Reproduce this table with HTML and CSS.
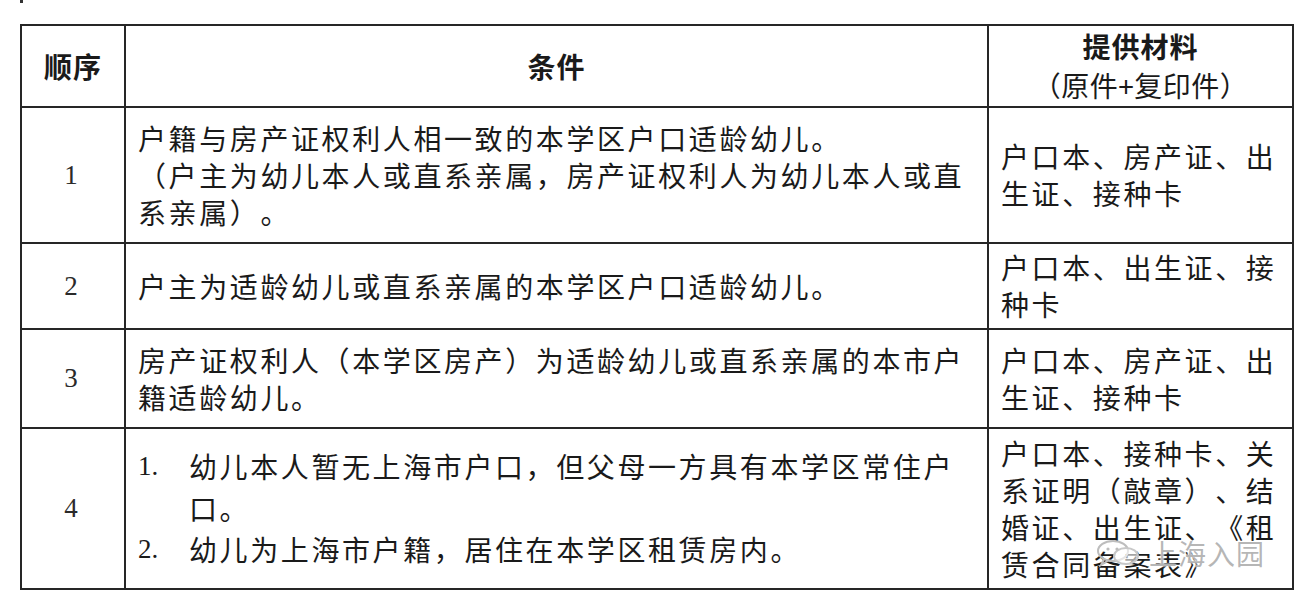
FILE: index.html
```html
<!DOCTYPE html>
<html lang="zh-CN">
<head>
<meta charset="utf-8">
<title>入园条件</title>
<link rel="stylesheet" href="styles.css">
</head>
<body>
<div class="page">
  <div class="mark"></div>
  <div class="sheet">
    <table class="grid">
      <colgroup>
        <col class="c-order">
        <col class="c-cond">
        <col class="c-mat">
      </colgroup>
      <thead>
        <tr class="r-head">
          <th class="h-center">顺序</th>
          <th class="h-center">条件</th>
          <th class="h-center"><span class="h-title">提供材料</span><span class="h-sub">（原件+复印件）</span></th>
        </tr>
      </thead>
      <tbody>
        <tr class="r1">
          <td class="num">1</td>
          <td class="txt">户籍与房产证权利人相一致的本学区户口适龄幼儿。<br>（户主为幼儿本人或直系亲属，房产证权利人为幼儿本人或直<br>系亲属）。</td>
          <td class="txt">户口本、房产证、出<br>生证、接种卡</td>
        </tr>
        <tr class="r2">
          <td class="num">2</td>
          <td class="txt">户主为适龄幼儿或直系亲属的本学区户口适龄幼儿。</td>
          <td class="txt">户口本、出生证、接<br>种卡</td>
        </tr>
        <tr class="r3">
          <td class="num">3</td>
          <td class="txt">房产证权利人（本学区房产）为适龄幼儿或直系亲属的本市户<br>籍适龄幼儿。</td>
          <td class="txt">户口本、房产证、出<br>生证、接种卡</td>
        </tr>
        <tr class="r4">
          <td class="num">4</td>
          <td class="txt list">
            <div class="item"><span class="marker">1.</span><span class="body">幼儿本人暂无上海市户口，但父母一方具有本学区常住户<br>口。</span></div>
            <div class="item"><span class="marker">2.</span><span class="body">幼儿为上海市户籍，居住在本学区租赁房内。</span></div>
          </td>
          <td class="txt">户口本、接种卡、关<br>系证明（敲章）、结<br>婚证、出生证、《租<br>赁合同备案表》</td>
        </tr>
      </tbody>
    </table>
    <div class="watermark">
      <svg class="wm-icon" width="46" height="30" viewBox="0 0 46 30" aria-hidden="true">
        <ellipse cx="18" cy="13" rx="15" ry="10" fill="none" stroke="#bdbdbd" stroke-width="2"/>
        <path d="M9 21 L6 27 L14 22" fill="none" stroke="#bdbdbd" stroke-width="2"/>
        <ellipse cx="31" cy="18" rx="12" ry="8" fill="rgba(255,255,255,0.6)" stroke="#c8c8c8" stroke-width="2"/>
        <circle cx="13" cy="11" r="1.6" fill="#bdbdbd"/>
        <circle cx="22" cy="11" r="1.6" fill="#bdbdbd"/>
      </svg>
      <span class="wm-text">上海入园</span>
    </div>
  </div>
</div>
</body>
</html>
```
FILE: styles.css
```css
* { box-sizing: border-box; }

html, body {
  margin: 0;
  padding: 0;
  background: #ffffff;
}

body {
  font-family: "Noto Sans CJK SC", "Noto Sans", sans-serif;
  color: #1a1a1a;
  width: 1309px;
  height: 610px;
  overflow: hidden;
}

.page {
  padding: 0 0 0 20px;
}

.mark {
  width: 3px;
  height: 3px;
  background: #333;
}

.sheet {
  position: relative;
  margin-top: 21px;
  width: 1272px;
}

.grid {
  border-collapse: collapse;
  table-layout: fixed;
  width: 1272px;
  border: 2px solid #262626;
  font-size: 28px;
  letter-spacing: 2.6px;
  text-spacing-trim: space-all;
}

.c-order { width: 104px; }
.c-cond { width: 863px; }
.c-mat { width: 305px; }

.grid th,
.grid td {
  border: 2px solid #262626;
  vertical-align: middle;
  padding: 0;
}

.r-head { height: 82px; }
.r1 { height: 136px; }
.r2 { height: 86px; }
.r3 { height: 99px; }
.r4 { height: 161px; }

.h-center {
  text-align: center;
  font-weight: 700;
  line-height: 39px;
  letter-spacing: 1px;
}

.h-title,
.h-sub {
  display: block;
}

.h-sub {
  font-weight: 400;
  letter-spacing: 0.5px;
}

.num {
  text-align: center;
  font-family: "Liberation Serif", "DejaVu Serif", serif;
  font-size: 27px;
  letter-spacing: 0;
  color: #2a2a2a;
  padding-right: 4px !important;
}

.txt {
  padding: 0 6px 0 12px !important;
  line-height: 37px;
  white-space: nowrap;
}

.list {
  line-height: 41.5px;
}

.item {
  display: flex;
}

.marker {
  flex: 0 0 51px;
  font-family: "Liberation Serif", "DejaVu Serif", serif;
  font-size: 27px;
  letter-spacing: 0;
}

.watermark {
  position: absolute;
  left: 1075px;
  top: 509px;
  display: flex;
  align-items: center;
  gap: 8px;
  pointer-events: none;
}

.wm-text {
  font-size: 28px;
  letter-spacing: 1px;
  color: rgba(150, 150, 150, 0.7);
  text-shadow: 0 0 2px #fff, 0 0 2px #fff;
}
```
